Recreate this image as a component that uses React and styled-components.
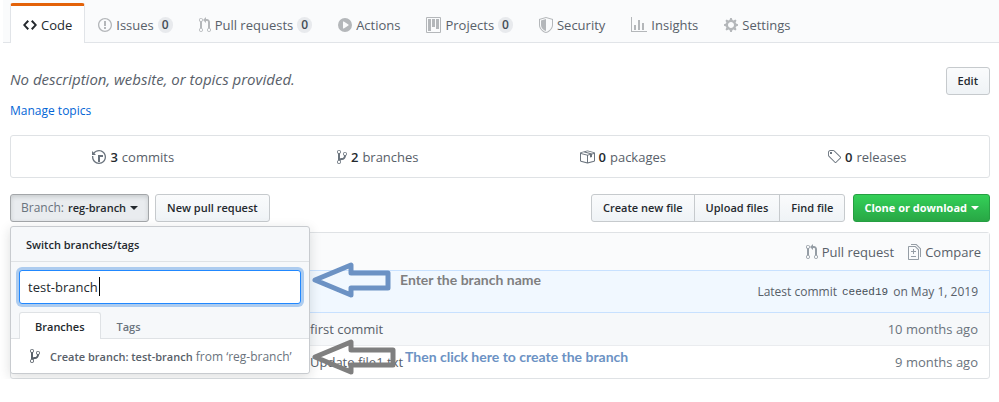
import React from "react";
import styled, { createGlobalStyle, css } from "styled-components";

const sans = '"Open Sans", "Noto Sans", sans-serif';
const mono = '"Liberation Mono", monospace';
const annotationFont = 'Lato, "Open Sans", sans-serif';

const color = {
  text: "#24292e",
  muted: "#586069",
  link: "#0366d6",
  line: "#dfe2e5",
  pale: "#fafbfc",
  orange: "#e36209",
  blueNote: "#6c92c4",
  grayNote: "#7f7f7f",
};

const icons = {
  code: [14, "M9.5 3L8 4.5 11.5 8 8 11.5 9.5 13 14 8 9.5 3zm-5 0L0 8l4.5 5L6 11.5 2.5 8 6 4.5 4.5 3z"],
  issue: [14, "M7 2.3c3.14 0 5.7 2.56 5.7 5.7s-2.56 5.7-5.7 5.7A5.71 5.71 0 0 1 1.3 8c0-3.14 2.56-5.7 5.7-5.7zM7 1C3.14 1 0 4.14 0 8s3.14 7 7 7 7-3.14 7-7-3.14-7-7-7zm1 3H6v5h2V4zm0 6H6v2h2v-2z"],
  pull: [12, "M11 11.28V5c-.03-.78-.34-1.47-.94-2.06C9.46 2.35 8.78 2.03 8 2H7V0L4 3l3 3V4h1c.27.02.48.11.69.31.21.2.3.42.31.69v6.28A1.993 1.993 0 0 0 10 15a1.993 1.993 0 0 0 1-3.72zm-1 2.92c-.66 0-1.2-.55-1.2-1.2 0-.65.55-1.2 1.2-1.2.65 0 1.2.55 1.2 1.2 0 .65-.55 1.2-1.2 1.2zM4 3c0-1.11-.89-2-2-2a1.993 1.993 0 0 0-1 3.72v6.56A1.993 1.993 0 0 0 2 15a1.993 1.993 0 0 0 1-3.72V4.72c.59-.34 1-.98 1-1.72zm-.8 10c0 .66-.55 1.2-1.2 1.2-.65 0-1.2-.55-1.2-1.2 0-.65.55-1.2 1.2-1.2.65 0 1.2.55 1.2 1.2zM2 4.2C1.34 4.2.8 3.65.8 3c0-.65.55-1.2 1.2-1.2.65 0 1.2.55 1.2 1.2 0 .65-.55 1.2-1.2 1.2z"],
  play: [14, "M14 8A7 7 0 1 1 0 8a7 7 0 0 1 14 0zm-8.223 3.482l4.599-3.066a.5.5 0 0 0 0-.832L5.777 4.518A.5.5 0 0 0 5 4.934v6.132a.5.5 0 0 0 .777.416z"],
  project: [15, "M10 12h3V2h-3v10zm-4-2h3V2H6v8zm-4 4h3V2H2v12zm-1 1h13V1H1v14zM14 0H1a1 1 0 0 0-1 1v14a1 1 0 0 0 1 1h13a1 1 0 0 0 1-1V1a1 1 0 0 0-1-1z"],
  shield: [14, "M0 2l7-2 7 2v6.02C14 12.69 8.69 16 7 16c-1.69 0-7-3.31-7-7.98V2zm1 .75L7 1l6 1.75v5.268C13 12.104 8.449 15 7 15c-1.449 0-6-2.896-6-6.982V2.75zm1 .75L7 2v12c-1.207 0-5-2.482-5-5.985V3.5z"],
  graph: [16, "M16 14v1H0V0h1v14h15zM5 13H3V8h2v5zm4 0H7V3h2v10zm4 0h-2V6h2v7z"],
  gear: [14, "M14 8.77v-1.6l-1.94-.64-.45-1.09.88-1.84-1.13-1.13-1.81.91-1.09-.45-.69-1.92h-1.6l-.63 1.94-1.11.45-1.84-.88-1.13 1.13.91 1.81-.45 1.09L0 7.23v1.59l1.94.64.45 1.09-.88 1.84 1.13 1.13 1.81-.91 1.09.45.69 1.92h1.59l.63-1.94 1.11-.45 1.84.88 1.13-1.13-.92-1.81.47-1.09L14 8.75v.02zM7 11c-1.66 0-3-1.34-3-3s1.34-3 3-3 3 1.34 3 3-1.34 3-3 3z"],
  history: [14, "M8 13H6V6h5v2H8v5zM7 1C4.81 1 2.87 2.02 1.59 3.59L0 2v4h4L2.5 4.5C3.55 3.17 5.17 2.3 7 2.3c3.14 0 5.7 2.56 5.7 5.7s-2.56 5.7-5.7 5.7A5.71 5.71 0 0 1 1.3 8c0-.34.03-.67.09-1H.08C.03 7.33 0 7.66 0 8c0 3.86 3.14 7 7 7s7-3.14 7-7-3.14-7-7-7z"],
  branch: [10, "M10 5c0-1.11-.89-2-2-2a1.993 1.993 0 0 0-1 3.72v.3c-.02.52-.23.98-.63 1.38-.4.4-.86.61-1.38.63-.83.02-1.48.16-2 .45V4.72a1.993 1.993 0 0 0-1-3.72C.88 1 0 1.89 0 3a2 2 0 0 0 1 1.72v6.56c-.59.35-1 .99-1 1.72 0 1.11.89 2 2 2 1.11 0 2-.89 2-2 0-.53-.2-1-.53-1.36.09-.06.48-.41.59-.47.25-.11.56-.17.94-.17 1.05-.05 1.95-.45 2.75-1.25S8.95 7.77 9 6.73h-.02C9.59 6.37 10 5.73 10 5zM2 1.8c.66 0 1.2.55 1.2 1.2 0 .65-.55 1.2-1.2 1.2C1.35 4.2.8 3.65.8 3c0-.65.55-1.2 1.2-1.2zm0 12.41c-.66 0-1.2-.55-1.2-1.2 0-.65.55-1.2 1.2-1.2.65 0 1.2.55 1.2 1.2 0 .65-.55 1.2-1.2 1.2zm6-8c-.66 0-1.2-.55-1.2-1.2 0-.65.55-1.2 1.2-1.2.65 0 1.2.55 1.2 1.2 0 .65-.55 1.2-1.2 1.2z"],
  package: [16, "M1 4.27v7.47c0 .45.3.84.75.97l6.5 1.73c.16.05.34.05.5 0l6.5-1.73c.45-.13.75-.52.75-.97V4.27c0-.45-.3-.84-.75-.97l-6.5-1.74a1.4 1.4 0 0 0-.5 0L1.75 3.3c-.45.13-.75.52-.75.97zm7 9.09l-6-1.59V5l6 1.61v6.75zM2 4l2.5-.67L11 5.06l-2.5.67L2 4zm13 7.77l-6 1.59V6.61l2-.55V8.5l2-.53V5.53L15 5v6.77zm-2-7.24L6.5 2.8l2-.53L15 4l-2 .53z"],
  tag: [14, "M7.73 1.73C7.26 1.26 6.62 1 5.96 1H3.5C2.13 1 1 2.13 1 3.5v2.47c0 .66.27 1.3.73 1.77l6.06 6.06c.39.39 1.02.39 1.41 0l4.59-4.59a.996.996 0 0 0 0-1.41L7.73 1.73zM2.38 7.09c-.31-.3-.47-.7-.47-1.13V3.5c0-.88.72-1.59 1.59-1.59h2.47c.42 0 .83.16 1.13.47l6.14 6.13-4.73 4.73-6.13-6.15zM3.01 3h2v2H3V3h.01z"],
  diff: [13, "M6 7h2v1H6v2H5V8H3V7h2V5h1v2zm-3 6h5v-1H3v1zM7.5 2L11 5.5V15c0 .55-.45 1-1 1H1c-.55 0-1-.45-1-1V3c0-.55.45-1 1-1h6.5zM10 6L7 3H1v12h9V6zM8.5 0H3v1h5l4 4v8h1V4.5L8.5 0z"],
};

const GlobalStyle = createGlobalStyle`
  *, *::before, *::after { box-sizing: border-box; }
  body {
    margin: 0;
    background: #fff;
    color: ${color.text};
    font: 13px/20px ${sans};
  }
  button, input { font-family: inherit; }
  a { color: inherit; text-decoration: none; }
`;

const Svg = styled.svg`
  display: block;
  flex: none;
  fill: currentColor;
`;

function Icon({ name }) {
  const [width, path] = icons[name];
  return (
    <Svg width={width} height="16" viewBox={`0 0 ${width} 16`} aria-hidden="true">
      <path fillRule="evenodd" d={path} />
    </Svg>
  );
}

const Page = styled.div`
  position: relative;
`;

const RepoNav = styled.nav`
  display: flex;
  margin-left: 3px;
  padding: 3px 7px 0;
  background: ${color.pale};
  box-shadow: inset 0 -1px 0 #e1e4e8;
`;

const NavTab = styled.a`
  display: flex;
  align-items: center;
  gap: 4px;
  height: 40px;
  padding: 0 12px;
  border: 1px solid transparent;
  border-top: 3px solid transparent;
  border-bottom: 0;
  border-radius: 3px 3px 0 0;
  color: ${color.muted};
  white-space: nowrap;

  svg { color: #b4b7ba; }

  ${(p) => p.$active && css`
    background: #fff;
    border-color: ${color.orange} #e1e4e8 transparent;
    color: ${color.text};
    svg { color: inherit; }
  `}
`;

const Counter = styled.span`
  padding: 0 4px;
  border-radius: 20px;
  background: #e8eaed;
  color: #444d56;
  font-size: 12px;
  line-height: 16px;
  font-weight: 600;
  text-align: center;
`;

const Content = styled.main`
  padding: 24px 9px 0 10px;
`;

const Intro = styled.section`
  display: flex;
  align-items: flex-start;
  justify-content: space-between;
`;

const Description = styled.p`
  margin: 0;
  color: ${color.muted};
  font-size: 15px;
  line-height: 24px;
  font-style: italic;
`;

const TopicsLink = styled.a`
  display: block;
  margin-top: 10px;
  color: ${color.link};
  font-size: 12px;
  line-height: 20px;
`;

const Summary = styled.ul`
  display: grid;
  grid-template-columns: repeat(4, 1fr);
  margin: 14px 0 16px;
  padding: 0;
  list-style: none;
  border: 1px solid ${color.line};
  border-radius: 3px;
`;

const SummaryLink = styled.a`
  display: flex;
  align-items: center;
  justify-content: center;
  gap: 4px;
  height: 41px;
  color: ${color.muted};

  svg { color: #6a737d; }
  strong { color: ${color.text}; font-weight: 600; }
`;

const Toolbar = styled.div`
  position: relative;
  display: flex;
  align-items: center;
  gap: 6px;
  margin-bottom: 10px;
`;

const Button = styled.button`
  display: inline-flex;
  align-items: center;
  justify-content: center;
  gap: 4px;
  height: 28px;
  padding: 0 11px;
  border: 1px solid #c6cacd;
  border-radius: 3px;
  background: linear-gradient(#fafbfc, #eff3f6);
  color: ${color.text};
  font-size: 11px;
  line-height: 20px;
  font-weight: 600;
  white-space: nowrap;

  ${(p) => p.$pressed && css`
    padding: 0 10px;
    border-color: #a3a6a9;
    background: #e9ecef;
    box-shadow: inset 0 2px 4px rgba(27, 31, 35, 0.15);
  `}

  ${(p) => p.$primary && css`
    padding: 0 10px;
    border-color: #269f42;
    background: linear-gradient(#34d058, #28a745);
    color: #fff;
    font-weight: 700;
  `}
`;

const Prefix = styled.span`
  color: #6a737d;
  font-size: 12px;
  font-weight: 400;
`;

const Caret = styled.span`
  border: 4px solid transparent;
  border-top-color: currentColor;
  border-bottom: 0;
`;

const ButtonGroup = styled.div`
  display: flex;
  margin: 0 2px 0 auto;

  ${Button} + ${Button} { margin-left: -1px; }
  ${Button}:not(:last-child) { border-top-right-radius: 0; border-bottom-right-radius: 0; }
  ${Button}:not(:first-child) { border-top-left-radius: 0; border-bottom-left-radius: 0; }
`;

const BranchMenu = styled.div`
  position: absolute;
  top: 100%;
  left: 0;
  z-index: 1;
  width: 300px;
  margin-top: 4px;
  border: 1px solid #c8cbcf;
  border-radius: 3px;
  background: #f6f8fa;
  box-shadow: 0 3px 12px rgba(27, 31, 35, 0.15);
`;

const MenuTitle = styled.div`
  padding: 8px 15px 6px;
  border-bottom: 1px solid ${color.line};
  font-size: 11px;
  line-height: 20px;
  font-weight: 600;
`;

const FilterBox = styled.label`
  position: relative;
  display: block;
  padding: 8px;
`;

const FilterInput = styled.input`
  display: block;
  width: 100%;
  height: 34px;
  padding: 0 8px;
  border: 1px solid #2188ff;
  border-radius: 3px;
  outline: 0;
  background: #fff;
  box-shadow: 0 0 0 3px rgba(3, 102, 214, 0.3);
  color: ${color.text};
  font-size: 13px;
`;

const TextCursor = styled.span`
  position: absolute;
  top: 15px;
  left: 88px;
  width: 1px;
  height: 19px;
  background: #000;
`;

const MenuTabs = styled.div`
  display: flex;
  padding: 0 8px;
  box-shadow: inset 0 -1px 0 ${color.line};
`;

const MenuTab = styled.button`
  height: 27px;
  padding: 0 15px;
  border: 1px solid transparent;
  border-bottom: 0;
  border-radius: 3px 3px 0 0;
  background: ${(p) => (p.$active ? "#fff" : "transparent")};
  border-color: ${(p) => (p.$active ? color.line : "transparent")};
  color: ${(p) => (p.$active ? color.text : "#6a737d")};
  font-size: 11px;
  font-weight: 600;
`;

const CreateBranch = styled.button`
  display: flex;
  align-items: center;
  gap: 10px;
  width: 100%;
  height: 34px;
  padding: 0 19px;
  border: 0;
  border-radius: 0 0 3px 3px;
  background: #fff;
  color: #6a737d;
  font-size: 12px;
  white-space: nowrap;

  svg { color: ${color.muted}; }
  strong { color: ${color.muted}; font-size: 11px; font-weight: 600; }
`;

const FileBox = styled.section`
  border: 1px solid ${color.line};
  border-radius: 3px;
`;

const CompareBar = styled.div`
  display: flex;
  justify-content: flex-end;
  gap: 14px;
  height: 37px;
  padding: 0 8px;
  background: ${color.pale};
  color: ${color.muted};

  a { display: flex; align-items: center; gap: 4px; }
  svg { color: #959da5; }
`;

const LatestCommit = styled.div`
  display: flex;
  align-items: center;
  justify-content: flex-end;
  gap: 5px;
  height: 43px;
  margin: 0 -1px;
  padding: 0 11px;
  border: 1px solid #c8e1ff;
  background: #f1f8ff;
  color: ${color.muted};
  font-size: 12px;

  a { color: #444d56; font: 11px/20px ${mono}; }
`;

const FileTable = styled.table`
  width: 100%;
  border-spacing: 0;
  color: ${color.muted};

  td { height: 32px; padding: 0; }
  td:first-child { width: 299px; }
  td:last-child { padding-right: 11px; text-align: right; color: #6a737d; }
  tr:first-child { background: #f6f8fa; }
  tr + tr td { height: 33px; border-top: 1px solid #eaecef; }
`;

const Note = styled.div`
  position: absolute;
  z-index: 2;
  top: ${(p) => p.$top}px;
  left: ${(p) => p.$left}px;
  display: flex;
  align-items: center;
  gap: 9px;
  font: 700 14px/18px ${annotationFont};
  color: ${(p) => p.$color};
  white-space: nowrap;
  pointer-events: none;
`;

function Arrow({ width, stroke }) {
  return (
    <svg width={width} height="38" viewBox={`0 0 ${width} 38`} aria-hidden="true">
      <path
        d={`M4 19L40 4V12H${width - 3}V27H40V34Z`}
        fill="none"
        stroke={stroke}
        strokeWidth="5"
        strokeLinejoin="round"
      />
    </svg>
  );
}

const tabs = [
  { icon: "code", label: "Code", active: true },
  { icon: "issue", label: "Issues", count: 0 },
  { icon: "pull", label: "Pull requests", count: 0 },
  { icon: "play", label: "Actions" },
  { icon: "project", label: "Projects", count: 0 },
  { icon: "shield", label: "Security" },
  { icon: "graph", label: "Insights" },
  { icon: "gear", label: "Settings" },
];

const totals = [
  { icon: "history", count: 3, label: "commits" },
  { icon: "branch", count: 2, label: "branches" },
  { icon: "package", count: 0, label: "packages" },
  { icon: "tag", count: 0, label: "releases" },
];

const files = [
  { message: "first commit", age: "10 months ago" },
  { message: "Update file1.txt", age: "9 months ago" },
];

export default function App() {
  return (
    <Page>
      <GlobalStyle />
      <RepoNav>
        {tabs.map((t) => (
          <NavTab key={t.label} href="#" $active={t.active}>
            <Icon name={t.icon} />
            {t.label}
            {t.count !== undefined && <Counter>{t.count}</Counter>}
          </NavTab>
        ))}
      </RepoNav>
      <Content>
        <Intro>
          <div>
            <Description>No description, website, or topics provided.</Description>
            <TopicsLink href="#">Manage topics</TopicsLink>
          </div>
          <Button>Edit</Button>
        </Intro>
        <Summary>
          {totals.map((t) => (
            <li key={t.label}>
              <SummaryLink href="#">
                <Icon name={t.icon} />
                <strong>{t.count}</strong>
                {t.label}
              </SummaryLink>
            </li>
          ))}
        </Summary>
        <Toolbar>
          <Button $pressed aria-expanded="true">
            <Prefix>Branch:</Prefix>
            reg-branch
            <Caret />
          </Button>
          <Button>New pull request</Button>
          <ButtonGroup>
            <Button>Create new file</Button>
            <Button>Upload files</Button>
            <Button>Find file</Button>
          </ButtonGroup>
          <Button $primary>
            Clone or download
            <Caret />
          </Button>
          <BranchMenu>
            <MenuTitle>Switch branches/tags</MenuTitle>
            <FilterBox>
              <FilterInput aria-label="Find or create a branch" defaultValue="test-branch" />
              <TextCursor />
            </FilterBox>
            <MenuTabs role="tablist">
              <MenuTab role="tab" aria-selected="true" $active>Branches</MenuTab>
              <MenuTab role="tab" aria-selected="false">Tags</MenuTab>
            </MenuTabs>
            <CreateBranch>
              <Icon name="branch" />
              <span>
                <strong>Create branch: test-branch</strong> from ‘reg-branch’
              </span>
            </CreateBranch>
          </BranchMenu>
        </Toolbar>
        <FileBox>
          <CompareBar>
            <a href="#"><Icon name="pull" />Pull request</a>
            <a href="#"><Icon name="diff" />Compare</a>
          </CompareBar>
          <LatestCommit>
            Latest commit <a href="#">ceeed19</a> on May 1, 2019
          </LatestCommit>
          <FileTable>
            <tbody>
              {files.map((f) => (
                <tr key={f.message}>
                  <td />
                  <td>{f.message}</td>
                  <td>{f.age}</td>
                </tr>
              ))}
            </tbody>
          </FileTable>
        </FileBox>
      </Content>
      <Note $top={261} $left={311} $color={color.grayNote}>
        <Arrow width={80} stroke={color.blueNote} />
        Enter the branch name
      </Note>
      <Note $top={338} $left={311} $color={color.blueNote}>
        <Arrow width={85} stroke={color.grayNote} />
        Then click here to create the branch
      </Note>
    </Page>
  );
}
